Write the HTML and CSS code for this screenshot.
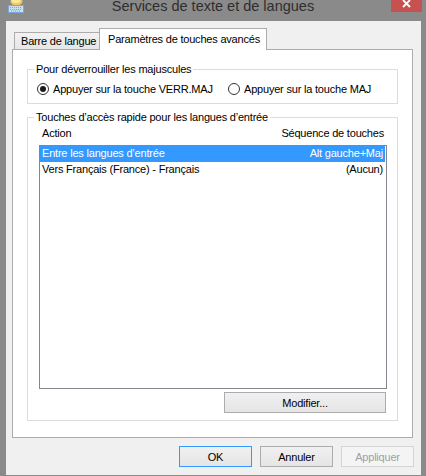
FILE: index.html
```html
<!DOCTYPE html>
<html lang="fr">
<head>
<meta charset="utf-8">
<title>Services de texte et de langues</title>
<link rel="stylesheet" href="styles.css">
</head>
<body>
<div class="window">
  <div class="titlebar">
    <svg class="app-icon" width="16" height="14" viewBox="0 0 16 14">
      <ellipse cx="8.5" cy="1.5" rx="6" ry="4" fill="#f0c94e"/>
      <ellipse cx="8" cy="0.5" rx="4.5" ry="2.8" fill="#fbe7a0"/>
      <rect x="0.5" y="5.5" width="15" height="7" fill="#c9def3" stroke="#7ea7d6"/>
      <path d="M2 7.5h12M2 9.5h12M3 11h10" stroke="#7ea7d6" stroke-width="1" stroke-dasharray="1 1"/>
    </svg>
    <div class="title">Services de texte et de langues</div>
    <div class="close">
      <svg width="9" height="8" viewBox="0 0 9 8"><path d="M1 0L8 7M8 0L1 7" stroke="#fff" stroke-width="1.8"/></svg>
    </div>
  </div>
  <div class="client">
    <div class="tabs">
      <div class="tab">Barre de langue</div>
      <div class="tab active">Paramètres de touches avancés</div>
    </div>
    <div class="panel">
      <fieldset class="group group-caps">
        <legend>Pour déverrouiller les majuscules</legend>
        <div class="radios">
          <label class="radio"><span class="radio-dot checked"></span>Appuyer sur la touche VERR.MAJ</label>
          <label class="radio"><span class="radio-dot"></span>Appuyer sur la touche MAJ</label>
        </div>
      </fieldset>
      <fieldset class="group group-keys">
        <legend>Touches d’accès rapide pour les langues d’entrée</legend>
        <div class="list-head"><span>Action</span><span>Séquence de touches</span></div>
        <div class="listbox">
          <div class="row selected"><span>Entre les langues d’entrée</span><span>Alt gauche+Maj</span></div>
          <div class="row"><span>Vers Français (France) - Français</span><span>(Aucun)</span></div>
        </div>
        <div class="modify-row"><button class="btn btn-wide">Modifier...</button></div>
      </fieldset>
    </div>
    <div class="buttons">
      <button class="btn default">OK</button>
      <button class="btn">Annuler</button>
      <button class="btn disabled">Appliquer</button>
    </div>
  </div>
</div>
</body>
</html>
```
FILE: styles.css
```css
html, body {
  margin: 0;
  padding: 0;
  background: #8a8a8a;
}
body {
  font-family: "Liberation Sans", Arial, sans-serif;
  font-size: 11px;
  letter-spacing: -0.2px;
  color: #000;
}
.window {
  width: 426px;
  height: 476px;
  background: #8a8a8a;
  display: flex;
  flex-direction: column;
  overflow: hidden;
}
.titlebar {
  height: 21px;
  flex: none;
  display: grid;
  grid-template-columns: 1fr auto 1fr;
  align-items: start;
}
.app-icon {
  display: block;
  margin-left: 8px;
}
.title {
  font-size: 14.5px;
  line-height: 13px;
  letter-spacing: 0;
  color: #2e2e2e;
  white-space: nowrap;
}
.close {
  justify-self: end;
  margin-right: 4px;
  width: 31px;
  height: 12px;
  background: #c75050;
  display: flex;
  justify-content: center;
  align-items: flex-start;
}
.close svg {
  display: block;
}
.client {
  flex: 1;
  margin: 0 5px 1px 6px;
  background: #f0f0f0;
  padding: 7px 8px 8px 6px;
  display: flex;
  flex-direction: column;
}
.tabs {
  height: 21px;
  display: flex;
  align-items: flex-end;
  padding-left: 2px;
}
.tab {
  box-sizing: border-box;
  height: 17px;
  width: 86px;
  border: 1px solid #acacac;
  border-bottom: none;
  background: linear-gradient(#f2f2f2, #e6e6e6);
  padding: 1px 0 0 6px;
  line-height: 14px;
  white-space: nowrap;
}
.tab.active {
  position: relative;
  z-index: 1;
  height: 22px;
  width: 168px;
  margin-left: -1px;
  margin-bottom: -1px;
  background: #fff;
  padding: 3px 0 0 8px;
}
.panel {
  box-sizing: border-box;
  height: 389px;
  border: 1px solid #acacac;
  background: #fff;
  padding: 12px 14px 16px;
}
.group {
  margin: 0;
  padding: 0;
  min-width: 0;
  border: 1px solid #dcdcdc;
}
.group legend {
  margin-left: 6px;
  padding: 0 2px;
  line-height: 14px;
}
.group-keys {
  margin-top: 6px;
}
.radios {
  display: grid;
  grid-template-columns: 191px auto;
  align-items: center;
  height: 16px;
  margin: 5px 0 6px 9px;
}
.radio {
  display: flex;
  align-items: center;
  gap: 4px;
  line-height: 14px;
  white-space: nowrap;
}
.radio-dot {
  box-sizing: border-box;
  width: 12px;
  height: 12px;
  border: 1px solid #333;
  border-radius: 50%;
  background: #fff;
  display: flex;
  align-items: center;
  justify-content: center;
}
.radio-dot.checked::after {
  content: "";
  width: 6px;
  height: 6px;
  border-radius: 50%;
  background: #1a1a1a;
}
.list-head {
  display: flex;
  justify-content: space-between;
  margin: 2px 10px 0 11px;
  padding: 0 3px 0 3px;
  line-height: 14px;
}
.listbox {
  box-sizing: border-box;
  height: 244px;
  margin: 5px 10px 0 11px;
  border: 1px solid #82878f;
  background: #fff;
  padding: 0 1px 0 0;
}
.row {
  height: 16px;
  display: flex;
  justify-content: space-between;
  padding: 0 2px 0 2px;
  line-height: 15px;
  white-space: nowrap;
}
.row.selected {
  background: #3399ff;
  color: #fff;
}
.modify-row {
  display: flex;
  justify-content: flex-end;
  margin: 3px 11px 7px 0;
}
.btn {
  box-sizing: border-box;
  width: 73px;
  height: 21px;
  padding: 0;
  margin: 0;
  border: 1px solid #acacac;
  background: linear-gradient(#f0f0f0, #e5e5e5);
  font: inherit;
  letter-spacing: inherit;
  color: #000;
}
.btn-wide {
  width: 162px;
}
.btn.default {
  border-color: #3399ff;
}
.btn.disabled {
  border-color: #d5d5d5;
  background: #f4f4f4;
  color: #a0a0a0;
}
.buttons {
  display: flex;
  justify-content: flex-end;
  gap: 8px;
  margin: 8px -1px 0 0;
}
```
